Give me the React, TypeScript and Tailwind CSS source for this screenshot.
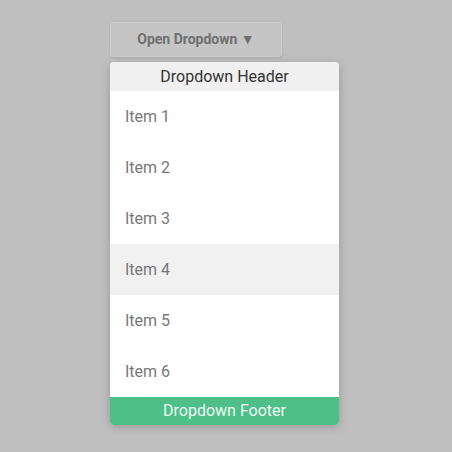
export default function App() {
  const items = ["Item 1", "Item 2", "Item 3", "Item 4", "Item 5", "Item 6"];

  return (
    <div className="min-h-screen w-full bg-[#bfbfbf] font-['Roboto',sans-serif]">
      <div className="pt-[22px] pl-[110px]">
        {/* Trigger button */}
        <button className="w-[172px] h-[35px] rounded-[3px] border border-[#cdcdcd] bg-[#c5c5c5] text-[14px] font-bold text-[#6f6f6f] shadow-[0_1px_2px_rgba(0,0,0,0.12)]">
          Open Dropdown ▼
        </button>

        {/* Menu */}
        <div className="mt-[5px] w-[229px] rounded-[4px] overflow-hidden bg-white shadow-[0_2px_10px_rgba(0,0,0,0.2)]">
          <div className="h-[29px] bg-[#f0f0f0] flex items-center justify-center text-[16px] text-[#333]">
            Dropdown Header
          </div>
          {items.map((item) => (
            <div
              key={item}
              className={`h-[51px] flex items-center pl-[15px] text-[16px] text-[#777] ${
                item === "Item 4" ? "bg-[#f1f1f1]" : "bg-white"
              }`}
            >
              {item}
            </div>
          ))}
          <div className="h-[28px] bg-[#4fbf8a] flex items-center justify-center text-[16px] text-[#eefaf3]">
            Dropdown Footer
          </div>
        </div>
      </div>
    </div>
  );
}
